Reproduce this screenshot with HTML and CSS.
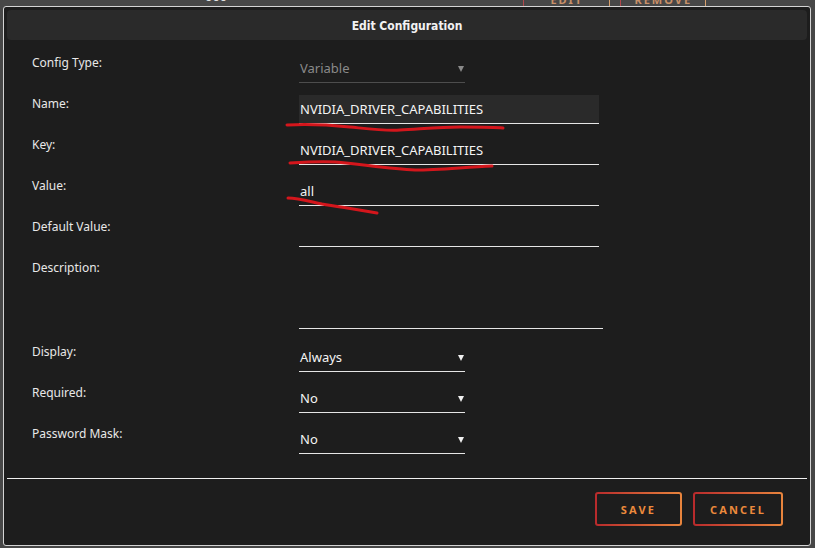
FILE: index.html
```html
<!DOCTYPE html>
<html lang="en">
<head>
<meta charset="utf-8">
<title>Edit Configuration</title>
<link rel="stylesheet" href="styles.css">
</head>
<body>
<div class="backdrop">
  <span class="bd-num">000</span>
  <span class="bd-btn bd-edit">EDIT</span>
  <span class="bd-btn bd-remove">REMOVE</span>
</div>
<div class="modal">
  <div class="modal-head">Edit Configuration</div>
  <div class="form">
    <div class="row">
      <div class="label">Config Type:</div>
      <div class="field select disabled"><span>Variable</span></div>
    </div>
    <div class="row">
      <div class="label">Name:</div>
      <div class="field text focused"><span>NVIDIA_DRIVER_CAPABILITIES</span></div>
    </div>
    <div class="row">
      <div class="label">Key:</div>
      <div class="field text"><span>NVIDIA_DRIVER_CAPABILITIES</span></div>
    </div>
    <div class="row">
      <div class="label">Value:</div>
      <div class="field text"><span>all</span></div>
    </div>
    <div class="row">
      <div class="label">Default Value:</div>
      <div class="field text"><span></span></div>
    </div>
    <div class="row row-tall">
      <div class="label">Description:</div>
      <div class="field area"></div>
    </div>
    <div class="row">
      <div class="label">Display:</div>
      <div class="field select"><span>Always</span></div>
    </div>
    <div class="row">
      <div class="label">Required:</div>
      <div class="field select"><span>No</span></div>
    </div>
    <div class="row">
      <div class="label">Password Mask:</div>
      <div class="field select"><span>No</span></div>
    </div>
  </div>
  <div class="divider"></div>
  <div class="footer">
    <button class="btn btn-save">SAVE</button>
    <button class="btn btn-cancel">CANCEL</button>
  </div>
</div>
<svg class="marks" width="815" height="548" viewBox="0 0 815 548" aria-hidden="true">
  <path d="M287,125 C305,124 330,125 350,127 C370,129 385,131 400,130 C420,129 440,127 460,127 C480,127 495,127 503,128"/>
  <path d="M290,163 C305,162 320,161 335,162 C360,164 390,169 415,170 C440,170 465,167 492,166"/>
  <path d="M288,198 C298,198 308,201 322,204 C340,207 360,210 377,213"/>
</svg>
</body>
</html>
```
FILE: styles.css
```css
* { box-sizing: border-box; }
html, body {
  margin: 0;
  padding: 0;
}
body {
  width: 815px;
  height: 548px;
  background: #474747;
  font-family: "Noto Sans", "Open Sans", "DejaVu Sans", sans-serif;
  font-size: 12px;
  color: #e6e6e6;
  position: relative;
  overflow: hidden;
}

/* page behind the modal */
.backdrop {
  height: 6px;
  overflow: hidden;
  display: flex;
  align-items: flex-start;
}
.bd-num {
  margin-left: 205px;
  margin-top: -11px;
  line-height: 14px;
  font-size: 13px;
  color: #e0e0e0;
}
.bd-btn {
  margin-top: -24px;
  height: 34px;
  padding-top: 16px;
  line-height: 14px;
  font-size: 11px;
  font-weight: bold;
  letter-spacing: 2px;
  text-align: center;
  color: #c99068;
  border: 1px solid transparent;
  background: linear-gradient(#474747, #474747) padding-box,
              linear-gradient(90deg, #b2474b, #d7a06c) border-box;
}
.bd-edit { margin-left: 296px; width: 87px; }
.bd-remove { margin-left: 10px; width: 86px; }

/* modal */
.modal {
  margin-left: 3px;
  width: 808px;
  height: 540px;
  background: #1d1d1d;
  border: 1px solid #d4d4d4;
  border-radius: 3px;
  padding: 3px 3px 0 3px;
}
.modal-head {
  height: 30px;
  padding-top: 1px;
  background: #2a2a2a;
  border-radius: 4px;
  display: flex;
  align-items: center;
  justify-content: center;
  font-family: "DejaVu Sans Condensed", "DejaVu Sans", sans-serif;
  font-stretch: condensed;
  font-weight: bold;
  font-size: 12px;
  color: #f2f2f2;
}

.form {
  padding: 13px 0 0 25px;
}
.row {
  display: grid;
  grid-template-columns: 267px 1fr;
  height: 41px;
}
.row-tall { height: 84px; }
.label {
  line-height: 20px;
  color: #e8e8e8;
}
.field {
  margin-top: 1px;
  height: 29px;
  border-bottom: 1px solid #e6e6e6;
  display: flex;
  align-items: center;
  padding-left: 1px;
  padding-bottom: 1px;
  font-size: 13px;
  color: #f4f4f4;
  position: relative;
}
.text { width: 300px; }
.focused { background: #2a2a2a; }
.area { width: 304px; height: 70px; }
.select { width: 166px; }
.select::after {
  content: "";
  position: absolute;
  right: 1px;
  top: 12px;
  border-left: 3px solid transparent;
  border-right: 3px solid transparent;
  border-top: 6px solid #f0f0f0;
}
.disabled { color: #8a8a8a; border-bottom-color: #4d4d4d; }
.disabled::after { border-top-color: #8a8a8a; }

.divider {
  margin-top: 13px;
  height: 1px;
  background: #f0f0f0;
}
.footer {
  display: flex;
  justify-content: flex-end;
  gap: 11px;
  padding: 13px 24px 0 0;
}
.btn {
  height: 34px;
  border: 2px solid transparent;
  border-radius: 3px;
  background: linear-gradient(#1d1d1d, #1d1d1d) padding-box,
              linear-gradient(90deg, #b82a2c, #e8853d) border-box;
  color: #ec8a3c;
  font-family: "Noto Sans", "DejaVu Sans", sans-serif;
  font-weight: bold;
  font-size: 11px;
  letter-spacing: 2.2px;
  padding: 0;
}
.btn-save { width: 87px; }
.btn-cancel { width: 90px; }

.marks {
  position: absolute;
  left: 0;
  top: 0;
  pointer-events: none;
  fill: none;
  stroke: #d4161c;
  stroke-width: 3;
  stroke-linecap: round;
  stroke-linejoin: round;
}
```
